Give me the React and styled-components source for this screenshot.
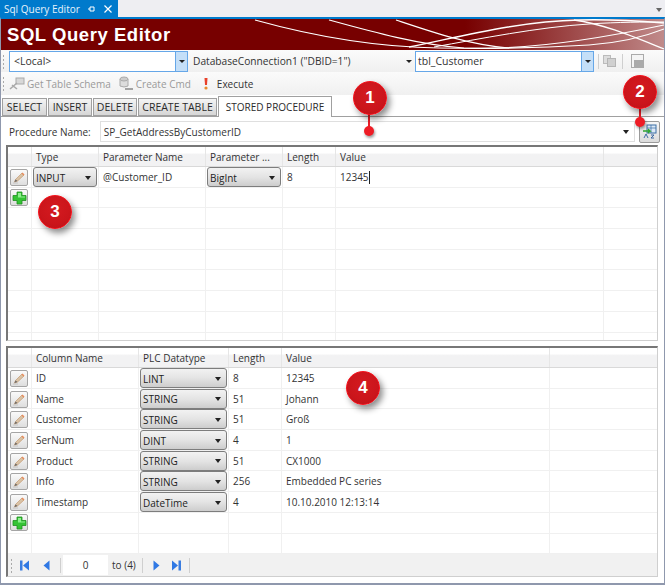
import React from "react";
import styled, { createGlobalStyle } from "styled-components";

const GlobalStyle = createGlobalStyle`
  html, body {
    margin: 0;
    padding: 0;
    background: #fff;
  }
  * { box-sizing: border-box; }
`;

const Page = styled.div`
  position: relative;
  width: 665px;
  height: 586px;
  overflow: hidden;
  background: #fff;
  font-family: "Open Sans", "Noto Sans", sans-serif;
  font-size: 10px;
  color: #333;
`;

const DocStrip = styled.div`
  height: 17px;
  background: #eeeef2;
  display: flex;
  justify-content: space-between;
  align-items: center;
`;

const DocTab = styled.div`
  width: 118px;
  height: 17px;
  background: #007acc;
  color: #e8f3fb;
  font-size: 10px;
  white-space: nowrap;
  padding-left: 4px;
  display: flex;
  align-items: center;
  gap: 8px;
`;

const DocArrow = styled.div`
  width: 0;
  height: 0;
  margin-right: 3px;
  margin-top: 2px;
  border-left: 3px solid transparent;
  border-right: 3px solid transparent;
  border-top: 4px solid #666;
`;

const Frame = styled.div`
  border-top: 2px solid #007acc;
  border-left: 1px solid #8f98ad;
  border-right: 1px solid #8f98ad;
  border-bottom: 2px solid #8f98ad;
  height: 568px;
  display: flex;
  flex-direction: column;
`;

const Banner = styled.div`
  position: relative;
  height: 31px;
  flex-shrink: 0;
  padding-left: 6px;
  background: linear-gradient(90deg, #770000 0%, #770000 70%, #8f2c2c 80%, #c08a8a 100%);
  color: #fff;
  font-family: "Liberation Sans", Arial, sans-serif;
  font-weight: bold;
  font-size: 18.5px;
  letter-spacing: 0.55px;
  line-height: 31px;
  overflow: hidden;
`;

const Waves = styled.svg`
  position: absolute;
  top: 0;
  right: 0;
`;

const Toolbar = styled.div`
  height: ${(p) => p.$h}px;
  flex-shrink: 0;
  padding-left: 1px;
  display: flex;
  align-items: center;
  background: linear-gradient(180deg, #fbfbfb 0%, #f0f0f0 100%);
`;

const Grip = styled.div`
  width: 3px;
  height: 15px;
  margin-right: 4px;
  background-image: radial-gradient(circle, #aaa 0.8px, transparent 1px);
  background-size: 3px 4px;
`;

const ComboBox = styled.div`
  width: ${(p) => p.$w}px;
  height: 21px;
  border: 1px solid #66a7e8;
  background: #fff;
  display: flex;
  align-items: center;
  justify-content: space-between;
  padding-left: ${(p) => p.$pl}px;
  font-size: 10.5px;
`;

const ComboButton = styled.div`
  width: 12px;
  height: 100%;
  background: #c4dff8;
  border-left: 1px solid #66a7e8;
  display: flex;
  align-items: center;
  justify-content: center;
`;

const Caret = styled.div`
  width: 0;
  height: 0;
  border-left: 3px solid transparent;
  border-right: 3px solid transparent;
  border-top: 3px solid #222;
`;

const FlatCombo = styled.div`
  width: ${(p) => p.$w}px;
  padding: 0 3px 0 5px;
  display: flex;
  align-items: center;
  justify-content: space-between;
  font-size: 10.2px;
`;

const ToolDivider = styled.div`
  width: 1px;
  height: 15px;
  flex-shrink: 0;
  margin-left: ${(p) => p.$l}px;
  margin-right: ${(p) => p.$r}px;
  background: #cfcfcf;
`;

const ToolButton = styled.div`
  display: flex;
  align-items: center;
  gap: ${(p) => p.$gap || 2}px;
  margin-right: ${(p) => p.$mr || 8}px;
  color: ${(p) => (p.$off ? "#9a9a9a" : "#333")};
`;

const TabRow = styled.div`
  height: 22px;
  flex-shrink: 0;
  padding-left: 1px;
  display: flex;
  align-items: flex-end;
  gap: 1px;
  border-bottom: 1px solid #a0a0a0;
`;

const Tab = styled.div`
  width: ${(p) => p.$w}px;
  height: ${(p) => (p.$on ? 21 : 18)}px;
  margin-bottom: ${(p) => (p.$on ? -1 : 0)}px;
  border: 1px solid #a0a0a0;
  border-bottom: ${(p) => (p.$on ? "none" : "1px solid #a0a0a0")};
  background: ${(p) => (p.$on ? "#fff" : "linear-gradient(180deg, #f4f4f4, #d6d6d6)")};
  display: flex;
  align-items: center;
  justify-content: center;
  font-size: ${(p) => (p.$on ? 10 : 10.5)}px;
  color: #2a2a2a;
  padding-bottom: ${(p) => (p.$on ? 1 : 0)}px;
`;

const ProcRow = styled.div`
  height: 27px;
  flex-shrink: 0;
  padding: 2px 4px 0 8px;
  display: flex;
  align-items: center;
  gap: 9px;
`;

const ProcInput = styled.div`
  flex: 1;
  height: 21px;
  padding: 0 5px 0 3px;
  border: 1px solid #dfdfdf;
  display: flex;
  align-items: center;
  justify-content: space-between;
`;

const ProcIcon = styled.div`
  width: 21px;
  height: 22px;
  margin-left: -5px;
  border: 1px solid #9a9a9a;
  border-radius: 2px;
  background: linear-gradient(180deg, #f6f6f6, #dcdcdc);
  display: flex;
  align-items: center;
  justify-content: center;
`;

const Grid = styled.div`
  margin: ${(p) => p.$mt}px 6px 0 5px;
  height: ${(p) => p.$h}px;
  flex-shrink: 0;
  border: 1px solid #cfcfcf;
  border-top: 2px solid #777;
  border-left: 2px solid #777;
  overflow: hidden;
  display: flex;
  flex-direction: column;
`;

const GridHead = styled.div`
  display: grid;
  grid-template-columns: ${(p) => p.$cols};
  height: 20px;
  flex-shrink: 0;
  background: linear-gradient(180deg, #fff 0%, #fff 30%, #f2f2f3 40%, #f2f2f3 100%);
  border-bottom: 1px solid #d9d9d9;
`;

const HeadCell = styled.div`
  padding-left: 4px;
  display: flex;
  align-items: center;
  border-left: 1px solid #e6e6e6;
  &:first-child { border-left: none; }
`;

const GridRow = styled.div`
  display: grid;
  grid-template-columns: ${(p) => p.$cols};
  height: 20.7px;
  flex-shrink: 0;
  border-bottom: 1px solid #f0f0f0;
`;

const Cell = styled.div`
  padding-left: 4px;
  display: flex;
  align-items: center;
  border-left: 1px solid #f0f0f0;
  position: relative;
  white-space: nowrap;
  padding-bottom: 1px;
  &:first-child {
    border-left: none;
    padding: 0 0 0 2px;
  }
`;

const RowButton = styled.div`
  width: 18px;
  height: 17px;
  border: 1px solid #a5a5a5;
  border-radius: 2px;
  background: linear-gradient(180deg, #fafafa, #dedede);
  display: flex;
  align-items: center;
  justify-content: center;
`;

const DropCell = styled.div`
  flex: 1;
  height: 20px;
  margin: 0 1px 0 -3px;
  padding: 1px 5px 0 2px;
  border: 1px solid #7d7d7d;
  border-radius: 3px;
  background: linear-gradient(180deg, #f2f2f2 0%, #e4e4e4 50%, #cdcdcd 100%);
  display: flex;
  align-items: center;
  justify-content: space-between;
  color: #222;
`;

const Caret2 = styled(Caret)`
  border-left-width: 3.5px;
  border-right-width: 3.5px;
  border-top-width: 4px;
`;

const Cursor = styled.span`
  display: inline-block;
  width: 1px;
  height: 13px;
  background: #222;
  vertical-align: -3px;
`;

const Pager = styled.div`
  margin-top: auto;
  height: 22px;
  flex-shrink: 0;
  padding-left: 2px;
  background: #f1f1f1;
  display: flex;
  align-items: center;
`;

const PageInput = styled.div`
  width: 45px;
  height: 20px;
  margin-right: 4px;
  background: #fff;
  display: flex;
  align-items: center;
  justify-content: center;
`;

const PagerIcon = styled.svg`
  margin-left: ${(p) => p.$l}px;
  margin-right: ${(p) => p.$r || 0}px;
  flex-shrink: 0;
`;

const Badge = styled.div`
  position: absolute;
  left: ${(p) => p.$x - 17}px;
  top: ${(p) => p.$y - 17}px;
  width: 34px;
  height: 34px;
  border-radius: 50%;
  background: radial-gradient(circle at 50% 40%, #d41a20 0%, #cb151b 60%, #b81218 100%);
  border: 1px solid #f5101a;
  box-shadow: 3px 4px 6px rgba(0, 0, 0, 0.45);
  color: #fff;
  font-family: "Liberation Sans", Arial, sans-serif;
  font-weight: bold;
  font-size: 17px;
  display: flex;
  align-items: center;
  justify-content: center;
  z-index: 3;
`;

const Pin = styled.div`
  position: absolute;
  left: ${(p) => p.$x - 1}px;
  top: ${(p) => p.$y}px;
  width: 2px;
  height: ${(p) => p.$h}px;
  background: #ee1c25;
  z-index: 2;
  &::after {
    content: "";
    position: absolute;
    left: -4px;
    bottom: -4px;
    width: 10px;
    height: 10px;
    border-radius: 50%;
    background: #ee1c25;
    box-shadow: 1px 2px 3px rgba(0, 0, 0, 0.4);
  }
`;

const Pencil = () => (
  <svg width="14" height="13" viewBox="0 0 14 13">
    <path d="M1 12 H6" stroke="#c4c4c4" strokeWidth="1" />
    <path d="M2.5 11 L3.5 8.5 L10 2 L12 4 L5.5 10 Z" fill="#d9c3a6" stroke="#c08f62" strokeWidth="0.6" />
    <path d="M9.5 2.5 L10.5 1.5 L12.5 3.5 L11.5 4.5 Z" fill="#e88a5a" />
    <path d="M2.5 11 L3.5 8.5 L5.5 10 Z" fill="#666" />
  </svg>
);

const Plus = () => (
  <svg width="15" height="14" viewBox="0 0 15 14">
    <path
      d="M5 1 H10 V4.5 H14 V9.5 H10 V13 H5 V9.5 H1 V4.5 H5 Z"
      fill="#35c435"
      stroke="#1f8f1f"
      strokeWidth="0.8"
    />
    <path d="M6 2 H9 V5.5 H13 V6.5 H6 Z" fill="#8ff08f" />
  </svg>
);

const Nav = ({ dir, stop, l, r }) => (
  <PagerIcon width="9" height="11" viewBox="0 0 9 11" $l={l} $r={r}>
    <g transform={dir === "left" ? "" : "translate(9 0) scale(-1 1)"}>
      {stop && <rect x="0" y="0.5" width="2.5" height="10" fill="#3a7de0" />}
      <path d={stop ? "M9 0.5 V10.5 L3 5.5 Z" : "M7.5 0.5 V10.5 L1.5 5.5 Z"} fill="#2f78e4" />
    </g>
  </PagerIcon>
);

const cols1 = "23px 67px 107px 77px 53px 268px 1fr";
const cols2 = "23px 107px 90px 53px 268px 1fr";

const outRows = [
  ["ID", "LINT", "8", "12345"],
  ["Name", "STRING", "51", "Johann"],
  ["Customer", "STRING", "51", "Groß"],
  ["SerNum", "DINT", "4", "1"],
  ["Product", "STRING", "51", "CX1000"],
  ["Info", "STRING", "256", "Embedded PC series"],
  ["Timestamp", "DateTime", "4", "10.10.2010 12:13:14"],
];

export default function App() {
  return (
    <Page>
      <GlobalStyle />
      <DocStrip>
        <DocTab>
          Sql Query Editor
          <svg width="8" height="8" viewBox="0 0 8 8">
            <path d="M0 4 H2 M2 2 V6 H6 V2 Z" stroke="#fff" fill="none" />
          </svg>
          <svg width="8" height="8" viewBox="0 0 8 8">
            <path d="M0.5 0.5 L7.5 7.5 M7.5 0.5 L0.5 7.5" stroke="#fff" strokeWidth="1.2" />
          </svg>
        </DocTab>
        <DocArrow />
      </DocStrip>
      <Frame>
        <Banner>
          SQL Query Editor
          <Waves width="425" height="31" viewBox="0 0 425 31" fill="none" stroke="#fff">
            <path d="M16 1 C70 16 130 28 200 29 C250 30 300 29 350 26 C380 24 405 18 425 10" strokeWidth="1.1" />
            <path d="M90 1 C130 12 180 26 225 29 C270 31 340 24 425 6" strokeWidth="1.1" />
            <path d="M157 1 C190 12 230 26 270 29" strokeWidth="1.1" />
            <path d="M170 28 C220 18 280 2 340 1 C370 0 400 2 425 4" strokeWidth="1.4" />
            <path d="M195 28 C240 20 300 8 350 5 C380 3 405 3 425 3" strokeWidth="1" />
            <path d="M335 1 C365 5 395 18 425 30" strokeWidth="1.3" />
          </Waves>
        </Banner>
        <Toolbar $h={22}>
          <Grip />
          <ComboBox $w={179} $pl={4}>
            &lt;Local&gt;
            <ComboButton><Caret /></ComboButton>
          </ComboBox>
          <FlatCombo $w={227}>
            DatabaseConnection1 ("DBID=1")
            <Caret />
          </FlatCombo>
          <ComboBox $w={179} $pl={2}>
            tbl_Customer
            <ComboButton><Caret /></ComboButton>
          </ComboBox>
          <ToolDivider $l={4} $r={4} />
          <svg width="13" height="12" viewBox="0 0 13 12">
            <rect x="0.5" y="0.5" width="7" height="8" fill="#ddd" stroke="#bbb" />
            <rect x="4.5" y="3.5" width="8" height="8" fill="#d0d0d0" stroke="#b5b5b5" />
          </svg>
          <ToolDivider $l={6} $r={8} />
          <svg width="13" height="14" viewBox="0 0 13 14">
            <rect x="0.5" y="0.5" width="12" height="13" fill="#f4f4f4" stroke="#aaa" />
            <rect x="3" y="6" width="9" height="7" fill="#aaa" />
          </svg>
        </Toolbar>
        <Toolbar $h={23}>
          <Grip />
          <ToolButton $off>
            <svg width="16" height="14" viewBox="0 0 16 14">
              <rect x="7" y="1" width="8" height="6" fill="#d8d8d8" stroke="#aaa" />
              <path d="M1 12 L8 6 M3 8 L8 12" stroke="#aaa" strokeWidth="1.6" />
            </svg>
            Get Table Schema
          </ToolButton>
          <ToolButton $off $mr={10}>
            <svg width="15" height="15" viewBox="0 0 15 15">
              <path d="M1 3 V10 Q5 12 9 10 V3" fill="#ddd" stroke="#aaa" />
              <ellipse cx="5" cy="3" rx="4" ry="2" fill="#ccc" stroke="#aaa" />
              <path d="M6 13 H14" stroke="#888" strokeWidth="1.5" />
            </svg>
            Create Cmd
          </ToolButton>
          <ToolButton $gap={6}>
            <svg width="10" height="13" viewBox="0 0 10 13">
              <path d="M3.5 1 H6.5 L6 8 H4 Z" fill="#e8402a" />
              <circle cx="5" cy="11" r="1.6" fill="#e88a2a" />
            </svg>
            Execute
          </ToolButton>
        </Toolbar>
        <TabRow>
          <Tab $w={45}>SELECT</Tab>
          <Tab $w={44}>INSERT</Tab>
          <Tab $w={44}>DELETE</Tab>
          <Tab $w={79}>CREATE TABLE</Tab>
          <Tab $on $w={114}>STORED PROCEDURE</Tab>
        </TabRow>
        <ProcRow>
          Procedure Name:
          <ProcInput>
            SP_GetAddressByCustomerID
            <Caret2 />
          </ProcInput>
          <ProcIcon>
            <svg width="15" height="15" viewBox="0 0 15 15">
              <rect x="5" y="1" width="9" height="8" fill="#dce9f7" stroke="#3a6ea5" />
              <path d="M5 4 H14 M9 1 V9" stroke="#3a6ea5" strokeWidth="0.7" />
              <path d="M1 7 H8 L6 5 M8 7 L6 9" stroke="#2fa52f" strokeWidth="1.4" fill="none" />
              <path d="M2 14 L4 10 L6 14 M9 11 H12 L9 14 H12" stroke="#2d5f9e" fill="none" strokeWidth="0.9" />
            </svg>
          </ProcIcon>
        </ProcRow>
        <Grid $mt={1} $h={196}>
          <GridHead $cols={cols1}>
            <HeadCell />
            <HeadCell>Type</HeadCell>
            <HeadCell>Parameter Name</HeadCell>
            <HeadCell>Parameter ...</HeadCell>
            <HeadCell>Length</HeadCell>
            <HeadCell>Value</HeadCell>
            <HeadCell />
          </GridHead>
          <GridRow $cols={cols1}>
            <Cell><RowButton><Pencil /></RowButton></Cell>
            <Cell>
              <DropCell>INPUT<Caret2 /></DropCell>
            </Cell>
            <Cell>@Customer_ID</Cell>
            <Cell>
              <DropCell>BigInt<Caret2 /></DropCell>
            </Cell>
            <Cell>8</Cell>
            <Cell><span>12345<Cursor /></span></Cell>
            <Cell />
          </GridRow>
          <GridRow $cols={cols1}>
            <Cell><RowButton><Plus /></RowButton></Cell>
            <Cell /><Cell /><Cell /><Cell /><Cell /><Cell />
          </GridRow>
          {[0, 1, 2, 3, 4, 5, 6].map((i) => (
            <GridRow key={i} $cols={cols1}>
              <Cell /><Cell /><Cell /><Cell /><Cell /><Cell /><Cell />
            </GridRow>
          ))}
        </Grid>
        <Grid $mt={5} $h={231}>
          <GridHead $cols={cols2}>
            <HeadCell />
            <HeadCell>Column Name</HeadCell>
            <HeadCell>PLC Datatype</HeadCell>
            <HeadCell>Length</HeadCell>
            <HeadCell>Value</HeadCell>
            <HeadCell />
          </GridHead>
          {outRows.map((r) => (
            <GridRow key={r[0]} $cols={cols2}>
              <Cell><RowButton><Pencil /></RowButton></Cell>
              <Cell>{r[0]}</Cell>
              <Cell>
                <DropCell>{r[1]}<Caret2 /></DropCell>
              </Cell>
              <Cell>{r[2]}</Cell>
              <Cell>{r[3]}</Cell>
              <Cell />
            </GridRow>
          ))}
          <GridRow $cols={cols2}>
            <Cell><RowButton><Plus /></RowButton></Cell>
            <Cell /><Cell /><Cell /><Cell /><Cell />
          </GridRow>
          <GridRow $cols={cols2}>
            <Cell /><Cell /><Cell /><Cell /><Cell /><Cell />
          </GridRow>
          <Pager>
            <Grip />
            <Nav dir="left" stop l={3} />
            <Nav dir="left" l={13} r={4} />
            <ToolDivider $l={5} $r={2} />
            <PageInput>0</PageInput>
            to (4)
            <ToolDivider $l={6} $r={2} />
            <Nav dir="right" l={7} />
            <Nav dir="right" stop l={11} r={3} />
            <ToolDivider $l={5} $r={0} />
          </Pager>
        </Grid>
      </Frame>
      <Pin $x={369} $y={112} $h={20} />
      <Badge $x={370} $y={98}>1</Badge>
      <Pin $x={640} $y={106} $h={17} />
      <Badge $x={640} $y={92}>2</Badge>
      <Badge $x={55} $y={212}>3</Badge>
      <Badge $x={363} $y={388}>4</Badge>
    </Page>
  );
}
